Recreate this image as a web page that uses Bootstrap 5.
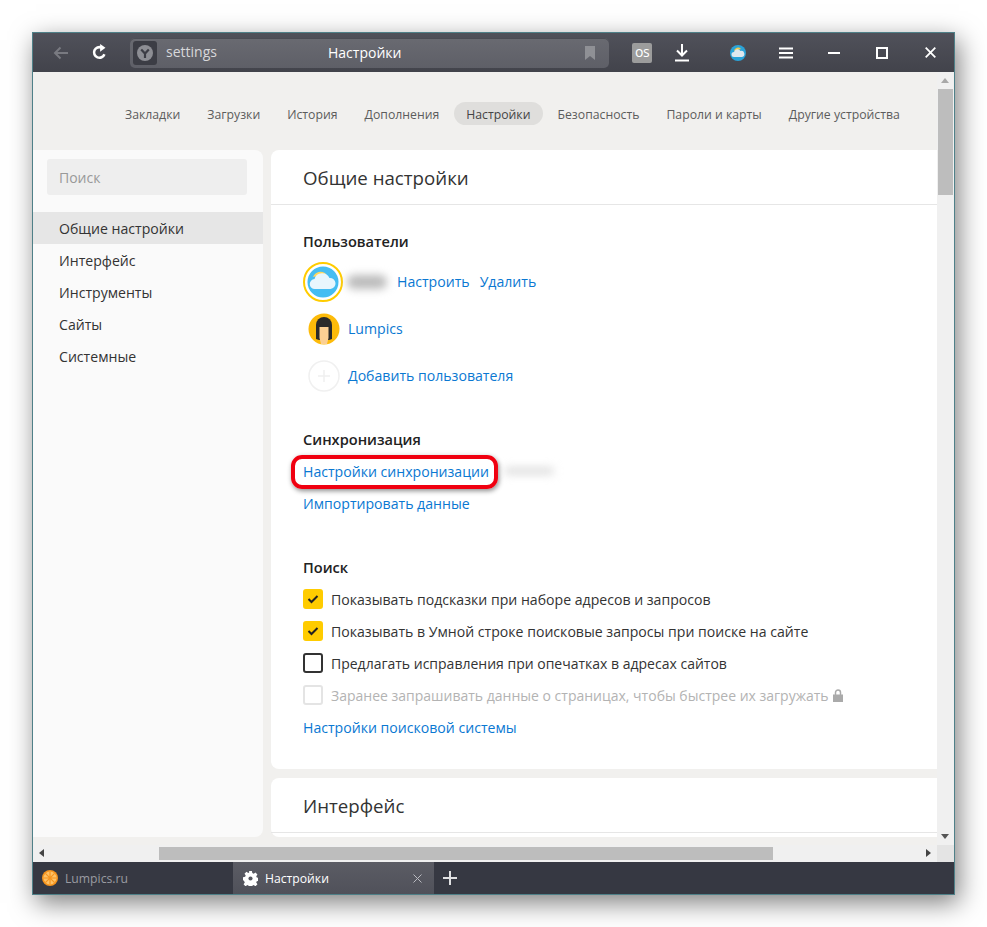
<!DOCTYPE html>
<html lang="ru">
<head>
    <meta charset="UTF-8">
    <meta name="viewport" content="width=device-width, initial-scale=1.0">
    <title>Настройки</title>
    <link rel="stylesheet" href="https://cdn.jsdelivr.net/npm/bootstrap@5.3.0/dist/css/bootstrap.min.css">
    <style>
        html, body { height: 100%; }
        body {
            font-family: "Open Sans", "Noto Sans", sans-serif;
            font-size: 14.1px;
            background: #fff;
            overflow: hidden;
        }
        .app-window {
            width: 923px;
            height: 863px;
            margin: 32px 0 0 32px;
            border: 1px solid #4f8088;
            box-shadow: 4px 8px 24px rgba(0, 0, 0, .5);
            background: #f1f0ee;
        }
        .top-bar {
            height: 39px;
            background: linear-gradient(#50515a, #42434b);
            color: #fff;
        }
        .bar-slot { width: 39px; height: 39px; }
        .bar-slot-wide { width: 48px; height: 39px; }
        .bar-slot-mid { width: 40px; height: 39px; }
        .addr-box {
            width: 479px;
            height: 30px;
            margin-left: 11px;
            margin-right: 13px;
            padding-left: 3px;
            border-radius: 5px;
            background: linear-gradient(#696a71, #5e5f67);
            box-shadow: inset 0 1px 0 #4b4c54;
            position: relative;
        }
        .addr-logo {
            width: 24px;
            height: 24px;
            border-radius: 3px;
            background: #3c3d45;
        }
        .addr-scheme { margin-left: 9px; margin-top: -2px; color: #d8d8da; font-size: 14px; }
        .addr-title { position: absolute; left: 198px; top: 4px; font-size: 14px; color: #fff; }
        .addr-mark { position: absolute; right: 13px; top: 8px; }
        .lastfm-box {
            width: 20px;
            height: 20px;
            border-radius: 2px;
            background: #9c9c9c;
            color: #fff;
            font-size: 14px;
            line-height: 18px;
            text-align: center;
            letter-spacing: -.5px;
        }
        .page-zone { height: 773px; }
        .page-view { width: 904px; overflow: hidden; }
        .top-tabs { height: 78px; padding: 30px 0 0 80px; gap: 3px; }
        .top-tabs .nav-link {
            height: 23px;
            padding: 0 12px;
            line-height: 25px;
            font-size: 12.25px;
            color: #5c5c5c;
            border-radius: 12px;
        }
        .top-tabs .nav-link.active { background: #dfdedc; color: #444; }
        .side-panel {
            width: 230px;
            height: 687px;
            background: #fafafa;
            border-radius: 0 8px 8px 0;
            padding-top: 9px;
        }
        .side-search {
            width: 200px;
            height: 36px;
            margin: 0 0 17px 14px;
            border: 0;
            border-radius: 3px;
            background: #eeeeee;
            padding: 0 12px;
            font-size: 14px;
            color: #888;
        }
        .side-search::placeholder { color: #999; }
        .side-panel .list-group-item {
            height: 32px;
            padding: 0 0 0 26px;
            line-height: 34px;
            border: 0;
            background: transparent;
            color: #333;
            font-size: 14.1px;
        }
        .side-panel .list-group-item.active { background: #e6e6e6; }
        .sheet {
            width: 666px;
            margin-left: 8px;
        }
        .sheet-gap { gap: 9px; }
        .sheet-card { border: 0; border-radius: 8px 0 0 8px; background: #fff; }
        .sheet-head {
            height: 55px;
            padding: 0 0 0 32px;
            border-bottom: 1px solid #e6e6e6;
            font-size: 18.7px;
            line-height: 56px;
            color: #333;
        }
        .sheet-head-big { height: 55px; line-height: 56px; }
        .sheet-body { padding: 21px 32px 26px; }
        .sec-title { height: 32px; line-height: 30px; font-weight: 600; font-size: 14.6px; color: #222; }
        .sec-gap-a { margin-top: 24px; line-height: 32px; }
        .sec-gap-b { margin-top: 32px; line-height: 32px; }
        .line-row { height: 32px; color: #333; }
        .line-row span, .line-row a { padding-top: 1px; }
        .line-tight span { font-size: 14px; }
        .user-row { height: 47px; }
        .sheet a { color: #0a78d2; text-decoration: none; }
        .sheet a.del-link { margin-left: 10px; }
        .avatar-slot { width: 40px; height: 40px; }
        .avatar-slot-sm { width: 41px; height: 40px; margin-right: 4px; }
        .name-blur {
            width: 40px;
            height: 14px;
            border-radius: 7px;
            background: #bbb;
            filter: blur(4px);
            margin: 0 6px 0 4px;
        }
        .sync-blur {
            width: 50px;
            height: 8px;
            border-radius: 4px;
            background: #e0e0e0;
            filter: blur(4px);
            margin-left: 15px;
        }
        .sync-mark {
            position: absolute;
            left: -12px;
            top: -5px;
            width: 207px;
            height: 34px;
            border: 4px solid #f00010;
            border-radius: 11px;
            box-shadow: 1px 2px 5px rgba(0, 0, 0, .45);
            pointer-events: none;
        }
        .sheet .form-check-input {
            width: 20px;
            height: 20px;
            margin: 0 8px 0 0;
            border: 2px solid #333;
            border-radius: 3px;
            box-shadow: none;
        }
        .sheet .form-check-input:checked {
            background-color: #ffcc00;
            border-color: #ffcc00;
            background-size: 14px;
            background-image: url("data:image/svg+xml,%3csvg xmlns='http://www.w3.org/2000/svg' viewBox='0 0 14 14'%3e%3cpath fill='none' stroke='%23222' stroke-width='2' d='M2.5 7l3 3 6-6'/%3e%3c/svg%3e");
        }
        .sheet .form-check-input:disabled { border-color: #e4e4e4; opacity: 1; background-color: #fff; }
        .line-off { color: #b3b3b3; }
        .v-track { width: 17px; background: #f0f0f0; position: relative; }
        .v-thumb { position: absolute; left: 1px; top: 17px; width: 15px; height: 106px; background: #bdbdbd; }
        .v-up, .v-down { position: absolute; left: 4px; width: 0; height: 0; border-left: 4.5px solid transparent; border-right: 4.5px solid transparent; }
        .v-up { top: 6px; border-bottom: 5px solid #a8a8a8; }
        .v-down { bottom: 6px; border-top: 5px solid #555; }
        .h-track { height: 17px; width: 904px; background: #f0f0f0; position: relative; }
        .h-thumb { position: absolute; left: 126px; top: 2px; width: 614px; height: 13px; background: #bdbdbd; }
        .h-left, .h-right { position: absolute; top: 4px; width: 0; height: 0; border-top: 4.5px solid transparent; border-bottom: 4.5px solid transparent; }
        .h-left { left: 6px; border-right: 5px solid #444; }
        .h-right { right: 6px; border-left: 5px solid #444; }
        .scroll-corner { width: 17px; height: 17px; background: #e4e4e4; }
        .tab-bar { height: 32px; background: #363842; font-size: 12.2px; }
        .tab-item { width: 200px; height: 32px; padding-left: 9px; color: #9a9ba1; }
        .tab-item-on {
            width: 201px;
            padding-left: 10px;
            color: #fff;
            background: linear-gradient(#5b5c64, #50515a);
        }
        .tab-label { margin-left: 7px; padding-top: 2px; }
        .tab-close { margin-left: auto; margin-right: 12px; }
        .tab-plus { margin-left: 9px; }
    </style>
</head>
<body>
    <div class="app-window d-flex flex-column">
        <div class="top-bar d-flex align-items-center flex-shrink-0">
            <div class="bar-slot d-flex align-items-center justify-content-center ms-2">
                <svg width="18" height="16" viewBox="0 0 18 16"><path d="M16 8H3M8.5 2.5L3 8l5.5 5.5" fill="none" stroke="#797a81" stroke-width="2"/></svg>
            </div>
            <div class="bar-slot d-flex align-items-center justify-content-center">
                <svg width="17" height="17" viewBox="0 0 16 16"><path d="M12.6 9.6A5 5 0 1 1 10 3.4" fill="none" stroke="#fff" stroke-width="2.4"/><path d="M8.6 0l5 3.6-5 3.6z" fill="#fff"/></svg>
            </div>
            <div class="addr-box d-flex align-items-center">
                <div class="addr-logo d-flex align-items-center justify-content-center">
                    <svg width="16" height="16" viewBox="0 0 16 16"><circle cx="8" cy="8" r="8" fill="#8d8e94"/><path d="M4.2 4.6L8 8.6l3.8-4M8 8.2V13" fill="none" stroke="#3c3d45" stroke-width="2.2"/></svg>
                </div>
                <span class="addr-scheme">settings</span>
                <span class="addr-title">Настройки</span>
                <svg class="addr-mark" width="12" height="14" viewBox="0 0 12 14"><path d="M1 0h10v14l-5-4-5 4z" fill="#8f9095"/></svg>
            </div>
            <div class="bar-slot-mid d-flex align-items-center justify-content-center">
                <div class="lastfm-box">os</div>
            </div>
            <div class="bar-slot-mid d-flex align-items-center justify-content-center me-2">
                <svg width="16" height="18" viewBox="0 0 16 18"><path d="M8 0v11M3 6.500l5 5 5-5" fill="none" stroke="#fff" stroke-width="2"/><path d="M1 16.500h14" stroke="#fff" stroke-width="2"/></svg>
            </div>
            <div class="bar-slot-wide d-flex align-items-center justify-content-center ms-1">
                <svg width="16" height="16" viewBox="0 0 16 16"><circle cx="8" cy="8" r="8" fill="#2ba3d8"/><path d="M4 6a4 4 0 0 1 7-2z" fill="#f6c945"/><path d="M4 12a2.500 2.500 0 0 1 0-5 3.500 3.500 0 0 1 6.500-1A3 3 0 0 1 12 12z" fill="#dfe8ee"/></svg>
            </div>
            <div class="bar-slot-wide d-flex align-items-center justify-content-center">
                <svg width="14" height="12" viewBox="0 0 14 12"><path d="M0 1.500h14M0 6h14M0 10.500h14" stroke="#fff" stroke-width="2"/></svg>
            </div>
            <div class="bar-slot-wide d-flex align-items-center justify-content-center">
                <svg width="12" height="2" viewBox="0 0 12 2"><path d="M0 1h12" stroke="#fff" stroke-width="2"/></svg>
            </div>
            <div class="bar-slot-wide d-flex align-items-center justify-content-center">
                <svg width="12" height="12" viewBox="0 0 12 12"><rect x="1" y="1" width="10" height="10" fill="none" stroke="#fff" stroke-width="2"/></svg>
            </div>
            <div class="bar-slot-wide d-flex align-items-center justify-content-center">
                <svg width="11" height="11" viewBox="0 0 11 11"><path d="M.7.7l9.600 9.600M10.300.7L.7 10.300" stroke="#fff" stroke-width="1.800"/></svg>
            </div>
        </div>

        <div class="page-zone d-flex flex-shrink-0">
            <div class="page-view">
                <ul class="top-tabs nav flex-nowrap">
                    <li class="nav-item"><a class="nav-link" href="#">Закладки</a></li>
                    <li class="nav-item"><a class="nav-link" href="#">Загрузки</a></li>
                    <li class="nav-item"><a class="nav-link" href="#">История</a></li>
                    <li class="nav-item"><a class="nav-link" href="#">Дополнения</a></li>
                    <li class="nav-item"><a class="nav-link active" href="#">Настройки</a></li>
                    <li class="nav-item"><a class="nav-link" href="#">Безопасность</a></li>
                    <li class="nav-item"><a class="nav-link" href="#">Пароли и карты</a></li>
                    <li class="nav-item"><a class="nav-link" href="#">Другие устройства</a></li>
                </ul>
                <div class="d-flex">
                    <div class="side-panel flex-shrink-0">
                        <input class="side-search d-block" type="text" placeholder="Поиск">
                        <div class="list-group list-group-flush">
                            <a class="list-group-item active" href="#">Общие настройки</a>
                            <a class="list-group-item" href="#">Интерфейс</a>
                            <a class="list-group-item" href="#">Инструменты</a>
                            <a class="list-group-item" href="#">Сайты</a>
                            <a class="list-group-item" href="#">Системные</a>
                        </div>
                    </div>
                    <div class="sheet sheet-gap flex-shrink-0 d-flex flex-column">
                        <div class="card sheet-card">
                            <div class="sheet-head">Общие настройки</div>
                            <div class="sheet-body">
                                <div class="sec-title">Пользователи</div>
                                <div class="user-row d-flex align-items-center">
                                    <div class="avatar-slot">
                                        <svg width="40" height="40" viewBox="0 0 40 40"><circle cx="20" cy="20" r="19" fill="#fff" stroke="#ffcc00" stroke-width="2"/><circle cx="20" cy="20" r="15.500" fill="#45bdf2"/><path d="M10 15a8 8 0 0 1 13-3z" fill="#ffd75e"/><path d="M12 27a5 5 0 0 1-.5-10 8 8 0 0 1 15-1 5.500 5.500 0 0 1 1 11z" fill="#e8f6fd"/></svg>
                                    </div>
                                    <div class="name-blur"></div>
                                    <a href="#" class="ms-1">Настроить</a>
                                    <a href="#" class="del-link">Удалить</a>
                                </div>
                                <div class="user-row d-flex align-items-center">
                                    <div class="avatar-slot-sm d-flex align-items-center justify-content-center">
                                        <svg width="32" height="32" viewBox="0 0 32 32"><circle cx="16" cy="16" r="15.500" fill="#fdbb0a"/><path d="M8 26V12a8 8 0 0 1 16 0v14l-3 1H11z" fill="#2a2a2a"/><path d="M11.500 14h9v11l-1.500 6h-6l-1.500-6z" fill="#fbcf93"/></svg>
                                    </div>
                                    <a href="#">Lumpics</a>
                                </div>
                                <div class="user-row d-flex align-items-center">
                                    <div class="avatar-slot-sm d-flex align-items-center justify-content-center">
                                        <svg width="32" height="32" viewBox="0 0 32 32"><circle cx="16" cy="16" r="15" fill="none" stroke="#f0f0f0" stroke-width="1.500"/><path d="M16 10v12M10 16h12" stroke="#f0f0f0" stroke-width="1.500"/></svg>
                                    </div>
                                    <a href="#">Добавить пользователя</a>
                                </div>

                                <div class="sec-title sec-gap-a">Синхронизация</div>
                                <div class="line-row d-flex align-items-center">
                                    <div class="position-relative">
                                        <a href="#" class="d-block">Настройки синхронизации</a>
                                        <div class="sync-mark"></div>
                                    </div>
                                    <div class="sync-blur"></div>
                                </div>
                                <div class="line-row d-flex align-items-center"><a href="#">Импортировать данные</a></div>

                                <div class="sec-title sec-gap-b">Поиск</div>
                                <div class="line-row d-flex align-items-center">
                                    <input class="form-check-input" type="checkbox" checked>
                                    <span>Показывать подсказки при наборе адресов и запросов</span>
                                </div>
                                <div class="line-row d-flex align-items-center">
                                    <input class="form-check-input" type="checkbox" checked>
                                    <span>Показывать в Умной строке поисковые запросы при поиске на сайте</span>
                                </div>
                                <div class="line-row line-tight d-flex align-items-center">
                                    <input class="form-check-input" type="checkbox">
                                    <span>Предлагать исправления при опечатках в адресах сайтов</span>
                                </div>
                                <div class="line-row line-tight line-off d-flex align-items-center">
                                    <input class="form-check-input" type="checkbox" disabled>
                                    <span>Заранее запрашивать данные о страницах, чтобы быстрее их загружать</span>
                                    <svg class="ms-1" width="10" height="13" viewBox="0 0 10 13"><path d="M2.500 6V3.500a2.500 2.500 0 0 1 5 0V6" fill="none" stroke="#aaa" stroke-width="1.500"/><rect y="5.500" width="10" height="7.500" fill="#aaa"/></svg>
                                </div>
                                <div class="line-row d-flex align-items-center"><a href="#">Настройки поисковой системы</a></div>
                            </div>
                        </div>
                        <div class="card sheet-card flex-grow-1">
                            <div class="sheet-head sheet-head-big">Интерфейс</div>
                        </div>
                    </div>
                </div>
            </div>
            <div class="v-track flex-grow-1">
                <div class="v-up"></div>
                <div class="v-thumb"></div>
                <div class="v-down"></div>
            </div>
        </div>

        <div class="d-flex flex-shrink-0">
            <div class="h-track">
                <div class="h-left"></div>
                <div class="h-thumb"></div>
                <div class="h-right"></div>
            </div>
            <div class="scroll-corner"></div>
        </div>

        <div class="tab-bar d-flex align-items-center flex-shrink-0">
            <div class="tab-item d-flex align-items-center">
                <svg width="16" height="16" viewBox="0 0 16 16"><circle cx="8" cy="8" r="8" fill="#f7941d"/><circle cx="8" cy="8" r="6.500" fill="#ffc266"/><path d="M8 1.500v13M1.500 8h13M3.400 3.400l9.200 9.200M12.600 3.400l-9.200 9.200" stroke="#f7941d" stroke-width="1.200"/></svg>
                <span class="tab-label">Lumpics.ru</span>
            </div>
            <div class="tab-item tab-item-on d-flex align-items-center">
                <svg width="15" height="15" viewBox="0 0 16 16"><path d="M6.500 0h3l.4 2.200 1.500.6 1.900-1.300 2.100 2.100-1.300 1.900.6 1.500 2.300.4v3l-2.300.4-.6 1.500 1.300 1.900-2.100 2.100-1.900-1.300-1.500.6-.4 2.200h-3l-.4-2.200-1.500-.6-1.900 1.300-2.100-2.100 1.300-1.900-.6-1.500L0 9.600v-3l2.300-.4.6-1.500L1.600 2.800 3.700.7l1.900 1.300 1-.4z" fill="#fff"/><circle cx="8" cy="8" r="2.200" fill="#55565e"/></svg>
                <span class="tab-label">Настройки</span>
                <svg class="tab-close" width="9" height="9" viewBox="0 0 9 9"><path d="M.5.5l8 8M8.500.5l-8 8" stroke="#b9bac0" stroke-width="1"/></svg>
            </div>
            <svg class="tab-plus" width="14" height="14" viewBox="0 0 14 14"><path d="M7 0v14M0 7h14" stroke="#e0e0e2" stroke-width="2"/></svg>
        </div>
    </div>
</body>
</html>
